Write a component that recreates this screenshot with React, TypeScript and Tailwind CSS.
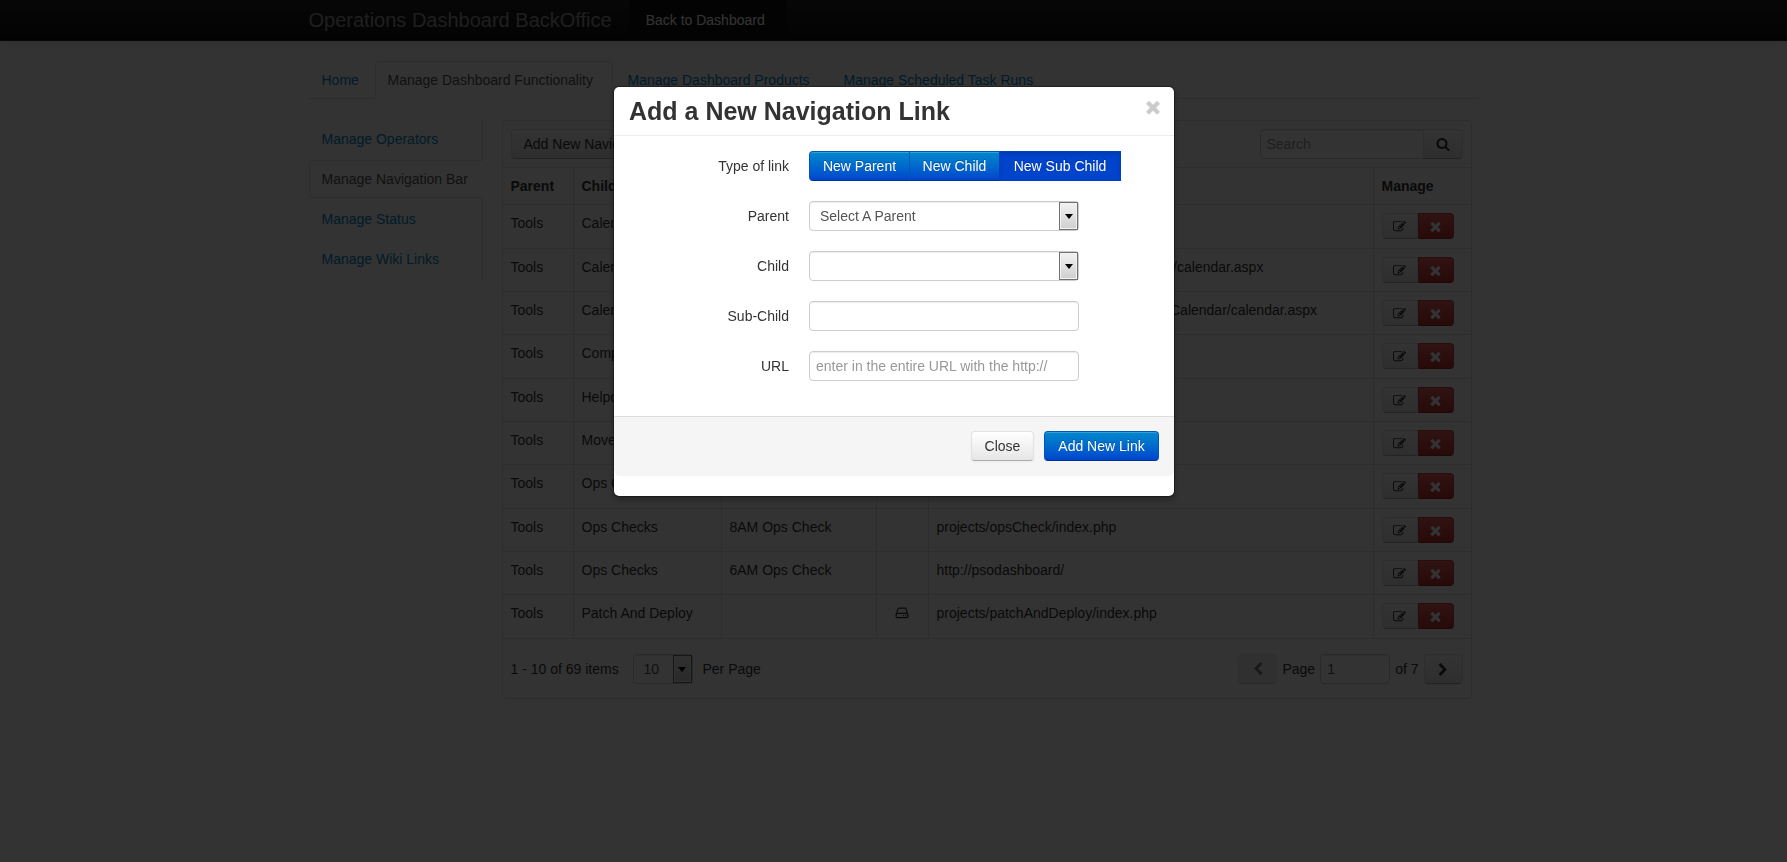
import React from "react";

const paths = {
  edit: "M888 1184l116-116-152-152-116 116v56h96v96h56zm440-720q-16-16-33 1l-350 350q-17 17-1 33t33-1l350-350q17-17 1-33zm80 594v190q0 119-84.5 203.5t-203.5 84.5h-832q-119 0-203.5-84.5t-84.5-203.5v-832q0-119 84.5-203.5t203.5-84.5h832q63 0 117 25 15 7 18 23 3 17-9 29l-49 49q-14 14-32 8-23-6-45-6h-832q-66 0-113 47t-47 113v832q0 66 47 113t113 47h832q66 0 113-47t47-113v-126q0-13 9-22l64-64q15-15 35-7t20 29zm-96-738l288 288-672 672h-288v-288zm444 132l-92 92-288-288 92-92q28-28 68-28t68 28l152 152q28 28 28 68t-28 68z",
  remove: "M1490 1322q0 40-28 68l-136 136q-28 28-68 28t-68-28l-294-294-294 294q-28 28-68 28t-68-28l-136-136q-28-28-28-68t28-68l294-294-294-294q-28-28-28-68t28-68l136-136q28-28 68-28t68 28l294 294 294-294q28-28 68-28t68 28l136 136q28 28 28 68t-28 68l-294 294 294 294q28 28 28 68z",
  left: "M1427 301l-531 531 531 531q19 19 19 45t-19 45l-166 166q-19 19-45 19t-45-19l-742-742q-19-19-19-45t19-45l742-742q19-19 45-19t45 19l166 166q19 19 19 45t-19 45z",
  search: "M1216 832q0-185-131.5-316.5t-316.5-131.5-316.5 131.5-131.5 316.5 131.5 316.5 316.5 131.5 316.5-131.5 131.5-316.5zm512 832q0 52-38 90t-90 38q-54 0-90-38l-343-342q-179 124-399 124-143 0-273.5-55.5t-225-150-150-225-55.5-273.5 55.5-273.5 150-225 225-150 273.5-55.5 273.5 55.5 225 150 150 225 55.5 273.5q0 220-124 399l343 343q37 37 37 90z",
};

function Icon({ name, className = "" }: { name: keyof typeof paths; className?: string }) {
  return (
    <svg viewBox="0 0 1792 1792" fill="currentColor" aria-hidden="true" className={className}>
      <path d={paths[name]} />
    </svg>
  );
}

function DriveIcon() {
  return (
    <svg viewBox="0 0 14 12" fill="none" stroke="currentColor" strokeWidth="1.2" aria-label="Drive" className="mx-auto h-3 w-[14px]">
      <path d="M1.6 6.4 3 1.8Q3.2 1.1 4 1.1h6q.8 0 1 .7l1.4 4.6" />
      <rect x="1.2" y="6.4" width="11.6" height="4.2" rx=".8" />
      <path d="M8 8.6h1M10.3 8.6h1" />
    </svg>
  );
}

const btn =
  "h-[30px] rounded border border-[#e2e2e2] border-b-[#adadad] bg-linear-to-b from-white to-[#e6e6e6] text-[#333] shadow-[inset_0_1px_0_rgba(255,255,255,0.2),0_1px_2px_rgba(0,0,0,0.05)]";
const primary =
  "h-[30px] border border-[#0055b8] border-b-[#003399] bg-linear-to-b from-[#0088cc] to-[#0044cc] text-white [text-shadow:0_-1px_0_rgba(0,0,0,0.25)] shadow-[inset_0_1px_0_rgba(255,255,255,0.2)]";
const field =
  "h-[30px] border border-[#ccc] bg-white px-1.5 text-[#555] outline-none shadow-[inset_0_1px_1px_rgba(0,0,0,0.075)] placeholder:text-[#999]";

function Arrow() {
  return (
    <span className="pointer-events-none absolute top-px right-px bottom-px flex w-[19px] items-center justify-center border border-[#707070] bg-linear-to-b from-[#f2f2f2] to-[#cfcfcf] shadow-[inset_0_0_0_1px_#f3f3f3]">
      <svg viewBox="0 0 8 5" fill="#000" className="h-[5px] w-2">
        <path d="M0 0h8L4 5z" />
      </svg>
    </span>
  );
}

type Row = { parent: string; child: string; sub?: string; icon?: boolean; url: string };

const rows: Row[] = [
  { parent: "Tools", child: "Calendars", url: "" },
  { parent: "Tools", child: "Calendars", url: "http://psodashboard/projects/schedule/calendar.aspx" },
  { parent: "Tools", child: "Calendars", url: "http://psodashboard/projects/changesCalendar/calendar.aspx" },
  { parent: "Tools", child: "Comp", url: "" },
  { parent: "Tools", child: "Helpdesk", url: "" },
  { parent: "Tools", child: "Moves", url: "" },
  { parent: "Tools", child: "Ops Checks", url: "" },
  { parent: "Tools", child: "Ops Checks", sub: "8AM Ops Check", url: "projects/opsCheck/index.php" },
  { parent: "Tools", child: "Ops Checks", sub: "6AM Ops Check", url: "http://psodashboard/" },
  { parent: "Tools", child: "Patch And Deploy", icon: true, url: "projects/patchAndDeploy/index.php" },
];

const sideTabs = ["Manage Operators", "Manage Navigation Bar", "Manage Status", "Manage Wiki Links"];

function Navbar() {
  return (
    <header className="h-[41px] border-b border-[#252525] bg-linear-to-b from-[#222] to-[#111] shadow-[0_1px_10px_rgba(0,0,0,0.1)]">
      <div className="mx-auto flex h-10 w-full max-w-[1170px] items-center">
        <a href="#" className="mr-[18px] text-[20px] leading-5 whitespace-nowrap text-[#999]">
          Operations Dashboard BackOffice
        </a>
        <a href="#" className="flex h-full w-[156px] items-center bg-[#111] px-4 text-white">
          Back to Dashboard
        </a>
      </div>
    </header>
  );
}

function Tabs() {
  const tab = "mr-0.5 -mb-px border px-3 py-2 whitespace-nowrap";
  const idle = `${tab} border-transparent text-[#0088cc]`;
  return (
    <nav className="mb-[21px] flex border-b border-[#e2e2e2]">
      <a href="#" className={`${idle} w-16`}>Home</a>
      <a href="#" aria-current="page" className={`${tab} w-[238px] rounded-t border-[#e2e2e2] border-b-white bg-white text-[#555]`}>
        Manage Dashboard Functionality
      </a>
      <a href="#" className={`${idle} w-[214px]`}>Manage Dashboard Products</a>
      <a href="#" className={idle}>Manage Scheduled Task Runs</a>
    </nav>
  );
}

function DataGrid() {
  const cell = "border-t border-l border-[#e2e2e2] px-2 pt-2 align-top first:border-l-0";
  return (
    <section className="min-w-0 flex-1 rounded border border-[#e2e2e2]">
      <div className="flex items-center justify-between p-2">
        <button type="button" className={`${btn} px-3`}>Add New Navigation Link</button>
        <form className="flex" onSubmit={(e) => e.preventDefault()}>
          <input aria-label="Search" placeholder="Search" className={`${field} w-[164px] rounded-l`} />
          <button type="button" aria-label="Search" className={`${btn} -ml-px flex w-10 items-center justify-center rounded-l-none`}>
            <Icon name="search" className="h-[14px] w-[14px]" />
          </button>
        </form>
      </div>
      <table className="w-full table-fixed border-separate border-spacing-0">
        <colgroup>
          <col className="w-[70px]" />
          <col className="w-[148px]" />
          <col className="w-[155px]" />
          <col className="w-[52px]" />
          <col />
          <col className="w-[98px]" />
        </colgroup>
        <thead>
          <tr className="h-[37px] text-left">
            <th className={cell}>Parent</th>
            <th className={cell}>Child</th>
            <th className={cell} aria-label="Sub-Child" />
            <th className={cell} aria-label="Icon" />
            <th className={cell} aria-label="URL" />
            <th className={cell}>Manage</th>
          </tr>
        </thead>
        <tbody>
          {rows.map((r, i) => (
            <tr key={i} className="h-[43px] nth-[3n+1]:h-11">
              <td className={cell}>{r.parent}</td>
              <td className={cell}>{r.child}</td>
              <td className={cell}>{r.sub}</td>
              <td className={cell}>
                {r.icon && <span className="flex h-5 items-center"><DriveIcon /></span>}
              </td>
              <td className={cell}>{r.url}</td>
              <td className={cell}>
                <div className="flex">
                  <button type="button" aria-label="Edit" className="flex h-[26px] w-9 items-center justify-center rounded-l border border-[#e2e2e2] border-b-[#adadad] bg-linear-to-b from-white to-[#e6e6e6]">
                    <Icon name="edit" className="h-[13px] w-[13px]" />
                  </button>
                  <button type="button" aria-label="Delete" className="flex h-[26px] w-9 items-center justify-center rounded-r border border-[#c4453f] border-b-[#932a25] bg-linear-to-b from-[#ee5f5b] to-[#bd362f] text-white">
                    <Icon name="remove" className="h-[15px] w-[15px]" />
                  </button>
                </div>
              </td>
            </tr>
          ))}
        </tbody>
      </table>
      <div className="flex items-center justify-between border-t border-[#e2e2e2] px-2 pt-[15px] pb-[14px]">
        <div className="flex items-center gap-2.5">
          <span className="min-w-28">1 - 10 of 69 items</span>
          <span className="relative">
            <select aria-label="Items per page" className={`${field} w-[60px] appearance-none rounded pl-2.5`}>
              <option>10</option>
              <option>20</option>
              <option>50</option>
            </select>
            <Arrow />
          </span>
          <span>Per Page</span>
        </div>
        <div className="flex items-center gap-[5px]">
          <button type="button" disabled aria-label="Previous page" className="flex h-[30px] w-[39px] items-center justify-center rounded border border-[#e2e2e2] border-b-[#adadad] bg-[#e6e6e6] opacity-65">
            <Icon name="left" className="h-[14px] w-[14px]" />
          </button>
          <label htmlFor="page">Page</label>
          <input id="page" defaultValue="1" className={`${field} w-[70px] rounded`} />
          <span>of 7</span>
          <button type="button" aria-label="Next page" className={`${btn} flex w-[39px] items-center justify-center`}>
            <Icon name="left" className="h-[14px] w-[14px] rotate-180" />
          </button>
        </div>
      </div>
    </section>
  );
}

function FormRow({ id, label, children }: { id: string; label: string; children: React.ReactNode }) {
  return (
    <div className="mb-5 flex gap-5">
      <label htmlFor={id} className="w-40 pt-[5px] text-right">{label}</label>
      {children}
    </div>
  );
}

function LinkDialog() {
  return (
    <div role="dialog" aria-modal="true" aria-labelledby="dialog-title" className="w-[562px] rounded-md border border-black/30 bg-white bg-clip-padding pb-5 shadow-[0_3px_7px_rgba(0,0,0,0.3)]">
      <div className="flex justify-between border-b border-[#eee] px-[15px] py-[9px]">
        <h3 id="dialog-title" className="text-[25px] leading-[30px] font-bold">Add a New Navigation Link</h3>
        <button type="button" aria-label="Close dialog" className="flex h-[22px] w-3 items-center justify-center text-[#ccc]">
          <Icon name="remove" className="h-5 w-5 shrink-0" />
        </button>
      </div>
      <form className="px-[15px] pt-[15px] pb-[15px]" onSubmit={(e) => e.preventDefault()}>
        <div className="mb-5 flex gap-5">
          <span id="type-label" className="w-40 pt-[5px] text-right">Type of link</span>
          <div role="group" aria-labelledby="type-label" className="flex">
            <button type="button" className={`${primary} w-[101px] rounded-l`}>New Parent</button>
            <button type="button" className={`${primary} -ml-px w-[91px]`}>New Child</button>
            <button type="button" aria-pressed="true" className="-ml-px h-[30px] w-[122px] border border-[#0040c0] bg-[#0044cc] text-white [text-shadow:0_-1px_0_rgba(0,0,0,0.25)] shadow-[inset_0_2px_4px_rgba(0,0,0,0.15)]">
              New Sub Child
            </button>
          </div>
        </div>
        <FormRow id="parent" label="Parent">
          <span className="relative">
            <select id="parent" className={`${field} w-[270px] appearance-none rounded pl-2.5`}>
              <option>Select A Parent</option>
            </select>
            <Arrow />
          </span>
        </FormRow>
        <FormRow id="child" label="Child">
          <span className="relative">
            <select id="child" className={`${field} w-[270px] appearance-none rounded pl-2.5`} />
            <Arrow />
          </span>
        </FormRow>
        <FormRow id="sub-child" label="Sub-Child">
          <input id="sub-child" type="text" className={`${field} w-[270px] rounded`} />
        </FormRow>
        <FormRow id="url" label="URL">
          <input id="url" type="text" placeholder="enter in the entire URL with the http://" className={`${field} w-[270px] rounded`} />
        </FormRow>
      </form>
      <div className="flex justify-end gap-2.5 rounded-b-md border-t border-[#ddd] bg-[#f5f5f5] px-[15px] pt-[14px] pb-[15px]">
        <button type="button" className={`${btn} w-[63px]`}>Close</button>
        <button type="button" className={`${primary} w-[115px] rounded`}>Add New Link</button>
      </div>
    </div>
  );
}

export default function App() {
  return (
    <div className="min-h-screen bg-white font-['Liberation_Sans',Arial,sans-serif] text-[14px] leading-5 text-[#333]">
      <Navbar />
      <main className="mx-auto w-full max-w-[1170px] pt-5">
        <Tabs />
        <div className="flex items-start gap-[19px] pr-[7px]">
          <nav className="flex w-[174px] flex-col border-r border-[#e2e2e2]">
            {sideTabs.map((t, i) => (
              <a
                key={t}
                href="#"
                className={
                  i === 1
                    ? "-mr-px mb-0.5 rounded-l border border-[#e2e2e2] border-r-white bg-white px-3 py-2 whitespace-nowrap text-[#555]"
                    : "-mr-px mb-0.5 border border-transparent px-3 py-2 whitespace-nowrap text-[#0088cc]"
                }
              >
                {t}
              </a>
            ))}
          </nav>
          <DataGrid />
        </div>
      </main>
      <div className="fixed inset-0 flex items-start justify-center bg-black/80 pt-[86px] pl-px">
        <LinkDialog />
      </div>
    </div>
  );
}
